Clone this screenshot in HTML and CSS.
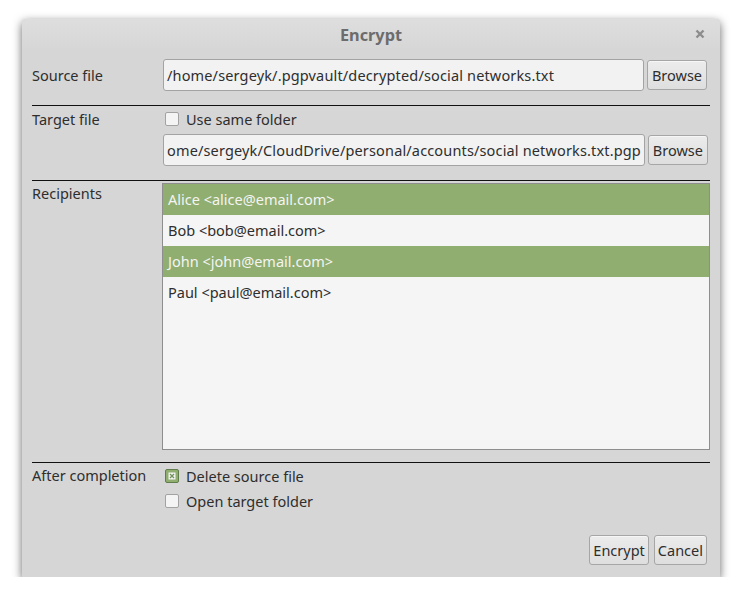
FILE: index.html
```html
<!DOCTYPE html>
<html>
<head>
<meta charset="utf-8">
<link rel="stylesheet" href="styles.css">
</head>
<body>
<div class="window">
  <div class="titlebar">
    <span class="title">Encrypt</span>
    <svg class="close" width="10" height="10" viewBox="0 0 10 10"><path d="M1.5 1.5 L8.5 8.5 M8.5 1.5 L1.5 8.5" stroke="#8c8c8c" stroke-width="2.4" stroke-linecap="butt"/></svg>
  </div>
  <div class="content">
    <div class="section s1">
      <div class="label lbl-mid">Source file</div>
      <div class="field">
        <div class="filerow">
          <div class="input">/home/sergeyk/.pgpvault/decrypted/social networks.txt</div>
          <button class="btn">Browse</button>
        </div>
      </div>
    </div>
    <div class="section s2">
      <div class="label lbl-check">Target file</div>
      <div class="field">
        <label class="check"><span class="box"></span>Use same folder</label>
        <div class="filerow">
          <div class="input">ome/sergeyk/CloudDrive/personal/accounts/social networks.txt.pgp</div>
          <button class="btn">Browse</button>
        </div>
      </div>
    </div>
    <div class="section s3">
      <div class="label lbl-top">Recipients</div>
      <div class="field">
        <div class="list">
          <div class="item selected">Alice &lt;alice@email.com&gt;</div>
          <div class="item">Bob &lt;bob@email.com&gt;</div>
          <div class="item selected">John &lt;john@email.com&gt;</div>
          <div class="item">Paul &lt;paul@email.com&gt;</div>
        </div>
      </div>
    </div>
    <div class="section s4">
      <div class="label lbl-check2">After completion</div>
      <div class="field">
        <label class="check row25"><span class="box checked"><svg width="14" height="14" viewBox="0 0 14 14"><rect x="0.5" y="0.5" width="13" height="13" rx="1.5" fill="#8fae6f" stroke="#627d4c"/><rect x="3.5" y="3.5" width="7" height="7" fill="#f4f4f4"/><path d="M5 5 L9 9 M9 5 L5 9" stroke="#71905a" stroke-width="1.3"/></svg></span>Delete source file</label>
        <label class="check row25"><span class="box"></span>Open target folder</label>
      </div>
    </div>
    <div class="actions">
      <button class="btn">Encrypt</button>
      <button class="btn">Cancel</button>
    </div>
  </div>
</div>
</body>
</html>
```
FILE: styles.css
```css
html, body {
  margin: 0;
  padding: 0;
  background: #ffffff;
}
body {
  font-family: "Noto Sans", "Open Sans", sans-serif;
  font-size: 14.5px;
  color: #2e2e2e;
}
.window {
  margin: 19px 0 0 22px;
  width: 698px;
  height: 558px;
  background: #d6d6d6;
  border-radius: 4px 4px 0 0;
  box-shadow: 0 3px 10px rgba(0, 0, 0, 0.6);
  display: flex;
  flex-direction: column;
}
.titlebar {
  height: 32px;
  position: relative;
  display: flex;
  align-items: center;
  justify-content: center;
  background: linear-gradient(#dedede, #d6d6d6);
  border-radius: 4px 4px 0 0;
}
.title {
  font-weight: bold;
  font-size: 16.3px;
  color: #6c6c6c;
}
.close {
  position: absolute;
  right: 15px;
  top: 10px;
}
.content {
  flex: 1;
  padding: 0 10px 12px 10px;
  display: flex;
  flex-direction: column;
}
.section {
  display: grid;
  grid-template-columns: 130px 1fr;
  border-bottom: 1px solid #111;
}
.s4 {
  border-bottom: none;
}
.label {
  line-height: 19px;
  white-space: nowrap;
}
.s1 {
  padding: 8px 0 14px 0;
}
.lbl-mid {
  align-self: center;
}
.s2 {
  padding: 3px 0 14px 0;
}
.lbl-check {
  line-height: 20px;
}
.s3 {
  padding: 2px 0 12px 0;
}
.lbl-top {
  line-height: 20px;
}
.s4 {
  padding-top: 0;
}
.lbl-check2 {
  line-height: 25px;
}
.field {
  display: flex;
  flex-direction: column;
}
.filerow {
  display: flex;
  align-items: center;
  margin-left: 1px;
}
.s2 .filerow {
  margin-top: 5px;
}
.input {
  flex: 1;
  height: 32px;
  box-sizing: border-box;
  border: 1px solid #a3a3a3;
  border-radius: 3px;
  background: #f2f2f2;
  padding: 0 3px;
  line-height: 30px;
  letter-spacing: 0.15px;
  white-space: nowrap;
  overflow: hidden;
}
.btn {
  font-family: inherit;
  font-size: 14.5px;
  color: #2e2e2e;
  height: 30px;
  box-sizing: border-box;
  padding: 0 3px;
  border: 1px solid #a6a6a6;
  border-radius: 3px;
  background: linear-gradient(#ececec, #dedede);
  box-shadow: inset 0 1px 0 #f6f6f6;
  line-height: 28px;
}
.filerow .btn {
  width: 60px;
  margin-left: 3px;
  margin-right: 3px;
}
.check {
  display: flex;
  align-items: center;
  height: 20px;
  padding-left: 3px;
}
.check.row25 {
  height: 25px;
}
.box {
  width: 14px;
  height: 14px;
  box-sizing: border-box;
  border: 1px solid #a2a2a2;
  border-radius: 2px;
  background: #f4f4f4;
  margin-right: 7px;
  flex: none;
}
.box.checked {
  border: none;
  background: none;
}
.box svg {
  display: block;
}
.list {
  height: 267px;
  box-sizing: border-box;
  border: 1px solid #8e8e8e;
  background: #f5f5f5;
}
.item {
  height: 31px;
  line-height: 31px;
  padding-left: 5px;
  white-space: nowrap;
}
.item.selected {
  background: #8fae6f;
  color: #f4f4f4;
}
.actions {
  margin-top: auto;
  display: flex;
  justify-content: flex-end;
  gap: 5px;
  padding-right: 3px;
}
```
